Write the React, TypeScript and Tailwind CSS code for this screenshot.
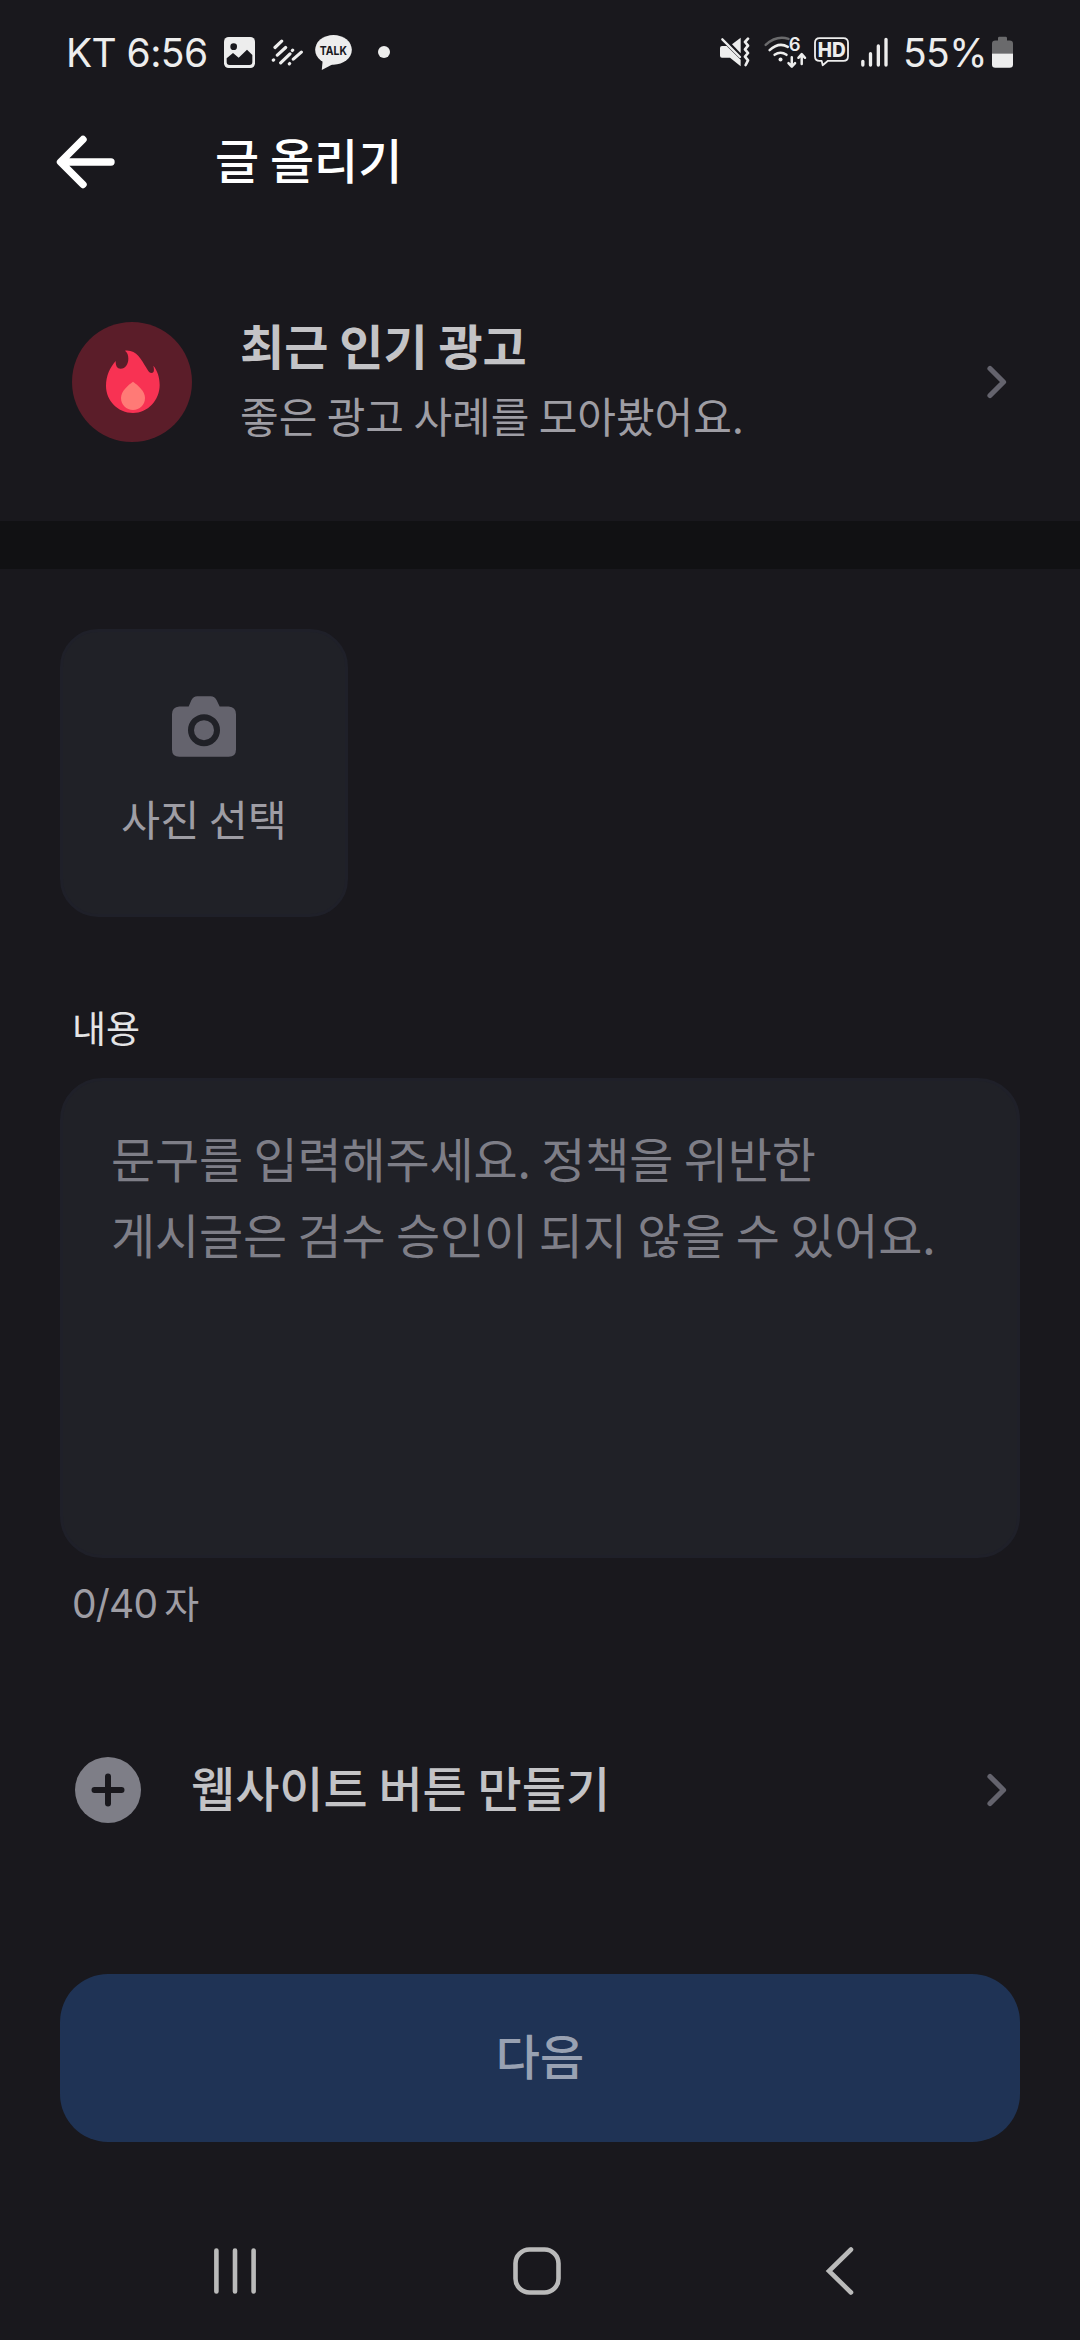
import React, { useState } from "react";

const ICON = "#ededed";

function ImageIcon() {
    return (
        <svg viewBox="0 0 93 93" className="w-[31px] h-[31px] ml-[19px]">
            <rect width="93" height="93" rx="14" fill={ICON} />
            <circle cx="29" cy="29" r="10" fill="#19181d" />
            <path d="M8 64 L27 48 L44 62 L69 38 L85 54 V75 Q85 84 76 84 H17 Q8 84 8 75Z" fill="#19181d" />
        </svg>
    );
}

function StripesIcon() {
    return (
        <svg viewBox="0 0 96 80" className="w-8 h-[27px] ml-4" fill="none" stroke={ICON} strokeWidth="9.5" strokeLinecap="round">
            <path d="M12 25 L32 6 M7 63 L8 62 M19 48 L44 25 M29 71 L57 44 M64 34 L65 33 M55 74 L56 73 M67 60 L91 39" />
        </svg>
    );
}

function TalkIcon() {
    return (
        <svg viewBox="0 0 111 106" className="w-[37px] h-[35px] ml-3">
            <ellipse cx="55.5" cy="45" rx="55.5" ry="45" fill={ICON} />
            <path d="M23 74 L20 106 L56 87Z" fill={ICON} />
            <text x="14" y="60" fontSize="37" textLength="82" lengthAdjust="spacingAndGlyphs" fill="#19181d" className="font-[Inter,sans-serif] font-bold">
                TALK
            </text>
        </svg>
    );
}

function MuteIcon() {
    return (
        <svg viewBox="0 0 90 90" className="w-[30px] h-[30px]">
            <path d="M36 22 L62 2 V49Z" fill={ICON} />
            <path d="M6 27 H20 L62 68 V88 L30 62 H6 Q0 62 0 56 V33 Q0 27 6 27Z" fill={ICON} />
            <path d="M7 7 L60 60" stroke={ICON} strokeWidth="7" strokeLinecap="round" />
            <path
                d="M84 5 L75 15 L84 26 L75 37 L84 48 L75 59 L84 70 L77 84"
                fill="none"
                stroke={ICON}
                strokeWidth="8"
                strokeLinecap="round"
                strokeLinejoin="round"
            />
        </svg>
    );
}

function WifiIcon() {
    return (
        <svg viewBox="0 0 130 98" className="w-[43px] h-[33px] ml-[14px] overflow-visible" fill="none" strokeWidth="7.5" strokeLinecap="round">
            <path d="M5 26 Q38 -4 74 8" stroke="#6a6a6c" />
            <path d="M17 42 Q45 16 72 32" stroke={ICON} />
            <path d="M32 56 Q50 43 68 56" stroke={ICON} />
            <circle cx="50" cy="70" r="6" fill={ICON} />
            <text x="75" y="44" fontSize="56" fill={ICON} className="font-[Inter,sans-serif] font-semibold leading-none">
                6
            </text>
            <path d="M84 63 V91 M74 81 L84 92 L94 81 M114 84 V56 M104 65 L114 54 L124 65" stroke={ICON} strokeLinejoin="round" />
        </svg>
    );
}

function HdIcon() {
    return (
        <svg viewBox="0 0 105 89" className="w-[35px] h-[30px] ml-[7px]">
            <path
                d="M17 3 H88 Q102 3 102 17 V57 Q102 71 88 71 H42 L26 84 L23 71 H17 Q3 71 3 57 V17 Q3 3 17 3Z"
                fill="none"
                stroke={ICON}
                strokeWidth="5.5"
                strokeLinejoin="round"
            />
            <text x="11" y="59" fontSize="60" textLength="84" lengthAdjust="spacingAndGlyphs" fill={ICON} className="font-[Inter,sans-serif] font-extrabold">
                HD
            </text>
        </svg>
    );
}

function SignalIcon() {
    return (
        <svg viewBox="0 0 81 90" className="w-[27px] h-[30px] ml-3" stroke={ICON} strokeWidth="10" strokeLinecap="round">
            <path d="M5.5 73 V84 M28.5 50 V84 M52 27 V84 M75 7 V84" />
        </svg>
    );
}

function BatteryIcon() {
    return (
        <svg viewBox="0 0 63 95" className="w-[21px] h-8 ml-2">
            <path d="M18 6 Q18 2 22 2 H41 Q45 2 45 6 V13 H53 Q63 13 63 23 V52 H0 V23 Q0 13 10 13 H18Z" fill="#6a6a6c" />
            <path d="M0 52 H63 V85 Q63 95 53 95 H10 Q0 95 0 85Z" fill={ICON} />
        </svg>
    );
}

function FlameIcon() {
    return (
        <svg viewBox="0 0 360 360" className="w-[120px] h-[120px] shrink-0">
            <circle cx="180" cy="180" r="180" fill="#5b1d29" />
            <path
                d="M159 86 C192 82 208 112 222 136 C230 150 232 153 239 153 C247 152 247 143 244 131 C256 145 263 166 263 189 C263 235 227 273 183 273 C138 273 102 236 102 192 C102 162 114 136 131 117 C131 132 135 140 146 140 C160 140 169 126 169 110 C169 99 166 91 159 86Z"
                fill="#f83253"
            />
            <path d="M183 179 C198 190 219 207 219 228 C219 248 203 264 183 264 C163 264 147 248 147 228 C147 207 168 190 183 179Z" fill="#ff7a76" />
        </svg>
    );
}

function CameraIcon() {
    return (
        <svg viewBox="0 0 192 182" className="w-16 h-[61px]">
            <path
                d="M22 31 H50 L58 12 Q64 0 76 0 H116 Q128 0 134 12 L143 31 H170 Q192 33 192 54 V160 Q192 182 170 182 H22 Q0 182 0 160 V54 Q0 33 22 31Z"
                fill="#64636d"
            />
            <circle cx="96" cy="102" r="39" fill="none" stroke="#202127" strokeWidth="18" />
        </svg>
    );
}

function ChevronRight() {
    return (
        <svg viewBox="0 0 20 34" className="w-5 h-[34px]" fill="none" stroke="#64636d" strokeWidth="5.2" strokeLinecap="round" strokeLinejoin="round">
            <path d="M3 3.5 L16.5 17 L3 30.5" />
        </svg>
    );
}

function StatusBar() {
    return (
        <div className="flex items-center justify-between h-[104px] pl-[66px] pr-[67px] text-[#ededed] font-[Inter,sans-serif] text-[39px] leading-none">
            <div className="flex items-center">
                <span className="w-[139px] whitespace-nowrap tracking-[-0.6px]">KT 6:56</span>
                <ImageIcon />
                <StripesIcon />
                <TalkIcon />
                <span className="w-3 h-3 ml-[26px] rounded-full bg-[#ededed]"></span>
            </div>
            <div className="flex items-center">
                <MuteIcon />
                <WifiIcon />
                <HdIcon />
                <SignalIcon />
                <span className="w-[81px] ml-[15px] whitespace-nowrap tracking-[-0.6px]">55%</span>
                <BatteryIcon />
            </div>
        </div>
    );
}

function NavigationBar() {
    return (
        <div className="flex items-center h-[138px] pl-[214px] pr-[225px] justify-between">
            <svg viewBox="0 0 42 48" className="w-[42px] h-12" stroke="#bababa" strokeWidth="4.6" strokeLinecap="round">
                <path d="M2.4 3.5 V44.5 M21 3.5 V44.5 M39.6 3.5 V44.5" />
            </svg>
            <svg viewBox="0 0 48 48" className="w-12 h-12 -ml-2" fill="none">
                <rect x="2.5" y="2.5" width="43" height="43" rx="14" stroke="#bababa" strokeWidth="4.6" />
            </svg>
            <svg viewBox="0 0 30 48" className="w-[30px] h-12" fill="none" stroke="#bababa" strokeWidth="4.6" strokeLinecap="round">
                <path d="M26 2.5 L4 24 L26 45.5" />
            </svg>
        </div>
    );
}

export default function App() {
    const [content, setContent] = useState("");

    return (
        <div className="flex flex-col w-[1080px] h-[2340px] overflow-hidden bg-[#19181d] font-['Noto_Sans_CJK_KR',sans-serif]">
            <StatusBar />

            <header className="flex items-center h-[116px] pl-14">
                <button type="button">
                    <svg viewBox="0 0 60 54" className="w-[60px] h-[54px]" fill="none" stroke="#ffffff" strokeWidth="7.4" strokeLinecap="round" strokeLinejoin="round">
                        <path d="M55 27 H5 M27 4.5 L4.5 27 L27 49.5" />
                    </svg>
                </button>
                <h1 className="ml-[99px] pb-[9px] text-[48px] leading-[56px] font-medium text-white">글 올리기</h1>
            </header>

            <section className="flex items-center h-[301px] pl-[72px] pr-[73px] pt-[22px]">
                <FlameIcon />
                <div className="flex-1 ml-12 pb-[7px]">
                    <h2 className="text-[48px] leading-[72px] font-bold text-[#c3c3c6]">최근 인기 광고</h2>
                    <p className="mt-px text-[42px] leading-[68px] text-[#9e9da4]">좋은 광고 사례를 모아봤어요.</p>
                </div>
                <ChevronRight />
            </section>

            <div className="h-12 bg-[#111113]"></div>

            <main className="flex flex-col px-[60px] pt-[60px]">
                <button
                    type="button"
                    className="flex flex-col items-center w-72 h-72 pt-[64px] rounded-[38px] border-[3px] border-[#1f2029] bg-[#202127]"
                >
                    <CameraIcon />
                    <span className="mt-[29px] text-[42.5px] leading-[64px] text-[#9e9da4]">사진 선택</span>
                </button>

                <label htmlFor="content" className="mt-[84px] ml-3 text-[37px] leading-[52px] text-[#e4e4e5]">
                    내용
                </label>
                <textarea
                    id="content"
                    value={content}
                    maxLength={40}
                    onChange={(event) => setContent(event.target.value)}
                    placeholder={"문구를 입력해주세요. 정책을 위반한\n게시글은 검수 승인이 되지 않을 수 있어요."}
                    className="block w-full h-[480px] mt-[25px] pl-[48px] pr-6 pt-[38px] resize-none rounded-[42px] border-[3px] border-[#1f2029] bg-[#202127] text-[48px] leading-[76px] tracking-[-0.17px] text-white placeholder:text-[#7e7e87] focus:outline-none"
                />
                <p className="mt-[20px] ml-3 text-[39px] leading-[52px] text-[#9e9da4] font-[Inter,'Noto_Sans_CJK_KR',sans-serif]">
                    <span className="tracking-[-0.8px]">{content.length}/40</span>
                    <span className="ml-[7px] text-[38px]">자</span>
                </p>

                <button type="button" className="flex items-center h-20 mt-[120px] pl-[15px] pr-[13px]">
                    <svg viewBox="0 0 66 66" className="w-[66px] h-[66px]">
                        <circle cx="33" cy="33" r="33" fill="#7e7e87" />
                        <path d="M19.5 33 H46.5 M33 19.5 V46.5" stroke="#19181d" strokeWidth="6" strokeLinecap="round" />
                    </svg>
                    <span className="flex-1 ml-[50px] pb-[8px] text-left text-[48px] leading-[72px] font-medium text-[#c3c3c6]">웹사이트 버튼 만들기</span>
                    <ChevronRight />
                </button>

                <button type="button" className="h-[168px] mt-[144px] pb-[8px] rounded-[48px] bg-[#1f3355] text-[48px] leading-[72px] font-medium text-[#98a1b2]">
                    다음
                </button>
            </main>

            <div className="flex-1"></div>
            <NavigationBar />
        </div>
    );
}
